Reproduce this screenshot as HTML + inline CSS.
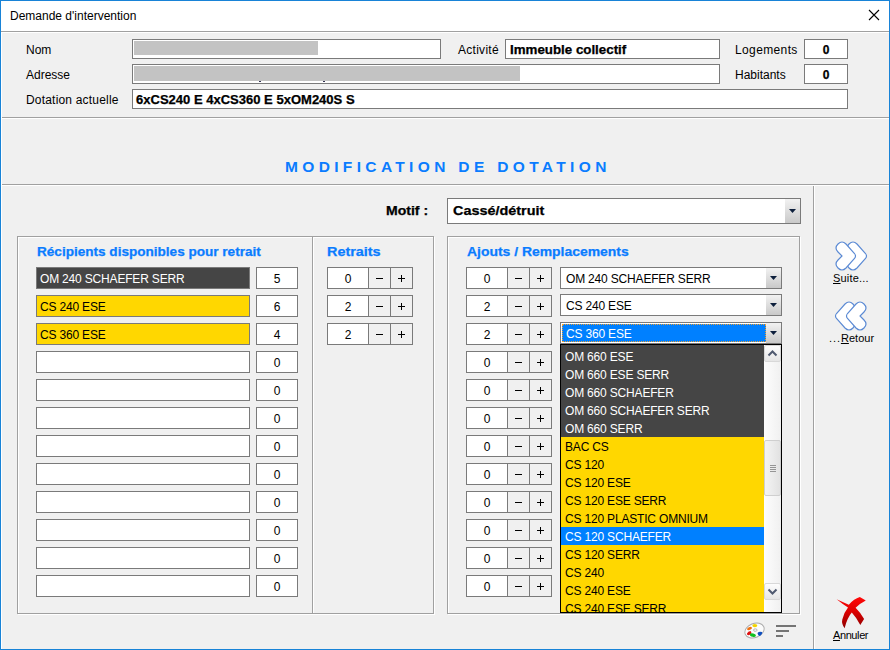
<!DOCTYPE html>
<html><head><meta charset="utf-8"><style>
html,body{margin:0;padding:0;}
body{width:890px;height:650px;position:relative;overflow:hidden;font-family:"Liberation Sans", sans-serif;background:#f0f0f0;}
body div, body svg{position:absolute;}
body div div{position:absolute;}
</style></head><body>
<div style="left:0px;top:0px;width:890px;height:650px;background:#1883d7;"></div>
<div style="left:1px;top:1px;width:888px;height:648px;background:#f0f0f0;"></div>
<div style="left:1px;top:1px;width:888px;height:30px;background:#ffffff;"></div>
<div style="left:1px;top:31px;width:888px;height:1px;background:#a0a0a0;"></div>
<div style="left:1px;top:32px;width:888px;height:1px;background:#ffffff;"></div>
<div style="left:1px;top:32px;width:1px;height:617px;background:#ffffff;"></div>
<div style="left:10px;top:10px;font-size:12px;line-height:12px;font-weight:normal;color:#000;white-space:nowrap;">Demande d'intervention</div>
<svg style="left:868px;top:9px" width="12" height="12" viewBox="0 0 12 12"><path d="M1 1L11 11M11 1L1 11" stroke="#000" stroke-width="1.1"/></svg>
<div style="left:26px;top:44px;font-size:12px;line-height:12px;font-weight:normal;color:#000;white-space:nowrap;">Nom</div>
<div style="left:26px;top:69px;font-size:12px;line-height:12px;font-weight:normal;color:#000;white-space:nowrap;">Adresse</div>
<div style="left:26px;top:94px;font-size:12px;line-height:12px;font-weight:normal;color:#000;white-space:nowrap;letter-spacing:0.19px;">Dotation actuelle</div>
<div style="left:132px;top:39px;width:309px;height:20px;background:#fff;border:1px solid #7a7a7a;box-sizing:border-box;"></div>
<div style="left:134px;top:41px;width:184px;height:14px;background:#c3c3c3;"></div>
<div style="left:132px;top:64px;width:588px;height:20px;background:#fff;border:1px solid #7a7a7a;box-sizing:border-box;"></div>
<div style="left:134px;top:66px;width:386px;height:15px;background:#c3c3c3;"></div>
<div style="left:259px;top:81px;width:2px;height:1px;background:#303050;"></div>
<div style="left:323px;top:81px;width:2px;height:1px;background:#303050;"></div>
<div style="left:132px;top:89px;width:716px;height:20px;background:#fff;border:1px solid #7a7a7a;box-sizing:border-box;"></div>
<div style="left:136px;top:94px;font-size:12px;line-height:12px;font-weight:bold;color:#000;white-space:nowrap;transform:scaleX(1.085);transform-origin:0 0;-webkit-text-stroke:0.25px #000;">6xCS240 E 4xCS360 E 5xOM240S S</div>
<div style="left:458px;top:44px;font-size:12px;line-height:12px;font-weight:normal;color:#000;white-space:nowrap;letter-spacing:0.28px;">Activité</div>
<div style="left:505px;top:39px;width:215px;height:20px;background:#fff;border:1px solid #7a7a7a;box-sizing:border-box;"></div>
<div style="left:510px;top:44px;font-size:12px;line-height:12px;font-weight:bold;color:#000;white-space:nowrap;transform:scaleX(1.11);transform-origin:0 0;-webkit-text-stroke:0.25px #000;">Immeuble collectif</div>
<div style="left:735px;top:44px;font-size:12px;line-height:12px;font-weight:normal;color:#000;white-space:nowrap;letter-spacing:0.37px;">Logements</div>
<div style="left:735px;top:69px;font-size:12px;line-height:12px;font-weight:normal;color:#000;white-space:nowrap;">Habitants</div>
<div style="left:804px;top:39px;width:44px;height:20px;background:#fff;border:1px solid #7a7a7a;box-sizing:border-box;"></div>
<div style="left:804px;top:64px;width:44px;height:20px;background:#fff;border:1px solid #7a7a7a;box-sizing:border-box;"></div>
<div style="left:804px;top:44px;font-size:12px;line-height:12px;font-weight:bold;color:#000;white-space:nowrap;-webkit-text-stroke:0.25px #000;width:44px;text-align:center;">0</div>
<div style="left:804px;top:69px;font-size:12px;line-height:12px;font-weight:bold;color:#000;white-space:nowrap;-webkit-text-stroke:0.25px #000;width:44px;text-align:center;">0</div>
<div style="left:2px;top:117px;width:887px;height:1px;background:#a0a0a0;"></div>
<div style="left:2px;top:118px;width:887px;height:1px;background:#ffffff;"></div>
<div style="left:285px;top:159px;font-size:15.5px;line-height:15.5px;font-weight:bold;color:#0a7cff;white-space:nowrap;letter-spacing:4.35px;">MODIFICATION DE DOTATION</div>
<div style="left:2px;top:184px;width:887px;height:1px;background:#a0a0a0;"></div>
<div style="left:2px;top:185px;width:887px;height:1px;background:#ffffff;"></div>
<div style="left:813px;top:186px;width:1px;height:463px;background:#a0a0a0;"></div>
<div style="left:814px;top:186px;width:1px;height:463px;background:#ffffff;"></div>
<div style="left:386px;top:205px;font-size:12px;line-height:12px;font-weight:bold;color:#000;white-space:nowrap;transform:scaleX(1.17);transform-origin:0 0;-webkit-text-stroke:0.25px #000;">Motif :</div>
<div style="left:447px;top:198px;width:354px;height:26px;background:#fff;border:1px solid #7a7a7a;box-sizing:border-box;"></div>
<div style="left:785px;top:199px;width:15px;height:24px;background:linear-gradient(#f2f2f2,#c9c9c9)"></div>
<svg style="left:789px;top:209px" width="7" height="4" viewBox="0 0 7 4"><path d="M0 0H7L3.5 4Z" fill="#0d1f3c"/></svg>
<div style="left:453px;top:205px;font-size:12px;line-height:12px;font-weight:bold;color:#000;white-space:nowrap;transform:scaleX(1.2);transform-origin:0 0;-webkit-text-stroke:0.25px #000;">Cassé/détruit</div>
<div style="left:17px;top:236px;width:417px;height:378px;border:1px solid #a0a0a0;box-sizing:border-box;box-shadow:inset 1px 1px 0 #fff, 1px 1px 0 #fff"></div>
<div style="left:312px;top:237px;width:1px;height:376px;background:#a0a0a0;"></div>
<div style="left:313px;top:237px;width:1px;height:376px;background:#ffffff;"></div>
<div style="left:447px;top:236px;width:353px;height:378px;border:1px solid #a0a0a0;box-sizing:border-box;box-shadow:inset 1px 1px 0 #fff, 1px 1px 0 #fff"></div>
<div style="left:37px;top:246px;font-size:12px;line-height:12px;font-weight:bold;color:#0a7cff;white-space:nowrap;transform:scaleX(1.13);transform-origin:0 0;-webkit-text-stroke:0.25px #0a7cff;">Récipients disponibles pour retrait</div>
<div style="left:327px;top:246px;font-size:12px;line-height:12px;font-weight:bold;color:#0a7cff;white-space:nowrap;transform:scaleX(1.2);transform-origin:0 0;-webkit-text-stroke:0.25px #0a7cff;">Retraits</div>
<div style="left:467px;top:246px;font-size:12px;line-height:12px;font-weight:bold;color:#0a7cff;white-space:nowrap;transform:scaleX(1.16);transform-origin:0 0;-webkit-text-stroke:0.25px #0a7cff;">Ajouts / Remplacements</div>
<div style="left:36px;top:267px;width:214px;height:22px;background:#454545;border:1px solid #7a7a7a;box-sizing:border-box;"></div>
<div style="left:40px;top:273px;font-size:12px;line-height:12px;font-weight:normal;color:#fff;white-space:nowrap;letter-spacing:-0.18px;">OM 240 SCHAEFER SERR</div>
<div style="left:256px;top:267px;width:42px;height:22px;background:#fff;border:1px solid #7a7a7a;box-sizing:border-box;"></div>
<div style="left:256px;top:273px;font-size:12px;line-height:12px;font-weight:normal;color:#000;white-space:nowrap;width:42px;text-align:center;">5</div>
<div style="left:36px;top:295px;width:214px;height:22px;background:#ffd700;border:1px solid #7a7a7a;box-sizing:border-box;"></div>
<div style="left:40px;top:301px;font-size:12px;line-height:12px;font-weight:normal;color:#000;white-space:nowrap;letter-spacing:-0.18px;">CS 240 ESE</div>
<div style="left:256px;top:295px;width:42px;height:22px;background:#fff;border:1px solid #7a7a7a;box-sizing:border-box;"></div>
<div style="left:256px;top:301px;font-size:12px;line-height:12px;font-weight:normal;color:#000;white-space:nowrap;width:42px;text-align:center;">6</div>
<div style="left:36px;top:323px;width:214px;height:22px;background:#ffd700;border:1px solid #7a7a7a;box-sizing:border-box;"></div>
<div style="left:40px;top:329px;font-size:12px;line-height:12px;font-weight:normal;color:#000;white-space:nowrap;letter-spacing:-0.18px;">CS 360 ESE</div>
<div style="left:256px;top:323px;width:42px;height:22px;background:#fff;border:1px solid #7a7a7a;box-sizing:border-box;"></div>
<div style="left:256px;top:329px;font-size:12px;line-height:12px;font-weight:normal;color:#000;white-space:nowrap;width:42px;text-align:center;">4</div>
<div style="left:36px;top:351px;width:214px;height:22px;background:#fff;border:1px solid #7a7a7a;box-sizing:border-box;"></div>
<div style="left:256px;top:351px;width:42px;height:22px;background:#fff;border:1px solid #7a7a7a;box-sizing:border-box;"></div>
<div style="left:256px;top:357px;font-size:12px;line-height:12px;font-weight:normal;color:#000;white-space:nowrap;width:42px;text-align:center;">0</div>
<div style="left:36px;top:379px;width:214px;height:22px;background:#fff;border:1px solid #7a7a7a;box-sizing:border-box;"></div>
<div style="left:256px;top:379px;width:42px;height:22px;background:#fff;border:1px solid #7a7a7a;box-sizing:border-box;"></div>
<div style="left:256px;top:385px;font-size:12px;line-height:12px;font-weight:normal;color:#000;white-space:nowrap;width:42px;text-align:center;">0</div>
<div style="left:36px;top:407px;width:214px;height:22px;background:#fff;border:1px solid #7a7a7a;box-sizing:border-box;"></div>
<div style="left:256px;top:407px;width:42px;height:22px;background:#fff;border:1px solid #7a7a7a;box-sizing:border-box;"></div>
<div style="left:256px;top:413px;font-size:12px;line-height:12px;font-weight:normal;color:#000;white-space:nowrap;width:42px;text-align:center;">0</div>
<div style="left:36px;top:435px;width:214px;height:22px;background:#fff;border:1px solid #7a7a7a;box-sizing:border-box;"></div>
<div style="left:256px;top:435px;width:42px;height:22px;background:#fff;border:1px solid #7a7a7a;box-sizing:border-box;"></div>
<div style="left:256px;top:441px;font-size:12px;line-height:12px;font-weight:normal;color:#000;white-space:nowrap;width:42px;text-align:center;">0</div>
<div style="left:36px;top:463px;width:214px;height:22px;background:#fff;border:1px solid #7a7a7a;box-sizing:border-box;"></div>
<div style="left:256px;top:463px;width:42px;height:22px;background:#fff;border:1px solid #7a7a7a;box-sizing:border-box;"></div>
<div style="left:256px;top:469px;font-size:12px;line-height:12px;font-weight:normal;color:#000;white-space:nowrap;width:42px;text-align:center;">0</div>
<div style="left:36px;top:491px;width:214px;height:22px;background:#fff;border:1px solid #7a7a7a;box-sizing:border-box;"></div>
<div style="left:256px;top:491px;width:42px;height:22px;background:#fff;border:1px solid #7a7a7a;box-sizing:border-box;"></div>
<div style="left:256px;top:497px;font-size:12px;line-height:12px;font-weight:normal;color:#000;white-space:nowrap;width:42px;text-align:center;">0</div>
<div style="left:36px;top:519px;width:214px;height:22px;background:#fff;border:1px solid #7a7a7a;box-sizing:border-box;"></div>
<div style="left:256px;top:519px;width:42px;height:22px;background:#fff;border:1px solid #7a7a7a;box-sizing:border-box;"></div>
<div style="left:256px;top:525px;font-size:12px;line-height:12px;font-weight:normal;color:#000;white-space:nowrap;width:42px;text-align:center;">0</div>
<div style="left:36px;top:547px;width:214px;height:22px;background:#fff;border:1px solid #7a7a7a;box-sizing:border-box;"></div>
<div style="left:256px;top:547px;width:42px;height:22px;background:#fff;border:1px solid #7a7a7a;box-sizing:border-box;"></div>
<div style="left:256px;top:553px;font-size:12px;line-height:12px;font-weight:normal;color:#000;white-space:nowrap;width:42px;text-align:center;">0</div>
<div style="left:36px;top:575px;width:214px;height:22px;background:#fff;border:1px solid #7a7a7a;box-sizing:border-box;"></div>
<div style="left:256px;top:575px;width:42px;height:22px;background:#fff;border:1px solid #7a7a7a;box-sizing:border-box;"></div>
<div style="left:256px;top:581px;font-size:12px;line-height:12px;font-weight:normal;color:#000;white-space:nowrap;width:42px;text-align:center;">0</div>
<div style="left:327px;top:267px;width:42px;height:22px;background:#fff;border:1px solid #7a7a7a;box-sizing:border-box;"></div>
<div style="left:327px;top:273px;font-size:12px;line-height:12px;font-weight:normal;color:#000;white-space:nowrap;width:42px;text-align:center;">0</div>
<div style="left:368px;top:267px;width:23px;height:22px;background:#f0f0f0;border:1px solid #7a7a7a;box-sizing:border-box;"></div>
<div style="left:376px;top:278px;width:7px;height:1px;background:#000;"></div>
<div style="left:390px;top:267px;width:23px;height:22px;background:#f0f0f0;border:1px solid #7a7a7a;box-sizing:border-box;"></div>
<div style="left:398px;top:278px;width:7px;height:1px;background:#000;"></div>
<div style="left:401px;top:275px;width:1px;height:7px;background:#000;"></div>
<div style="left:327px;top:295px;width:42px;height:22px;background:#fff;border:1px solid #7a7a7a;box-sizing:border-box;"></div>
<div style="left:327px;top:301px;font-size:12px;line-height:12px;font-weight:normal;color:#000;white-space:nowrap;width:42px;text-align:center;">2</div>
<div style="left:368px;top:295px;width:23px;height:22px;background:#f0f0f0;border:1px solid #7a7a7a;box-sizing:border-box;"></div>
<div style="left:376px;top:306px;width:7px;height:1px;background:#000;"></div>
<div style="left:390px;top:295px;width:23px;height:22px;background:#f0f0f0;border:1px solid #7a7a7a;box-sizing:border-box;"></div>
<div style="left:398px;top:306px;width:7px;height:1px;background:#000;"></div>
<div style="left:401px;top:303px;width:1px;height:7px;background:#000;"></div>
<div style="left:327px;top:323px;width:42px;height:22px;background:#fff;border:1px solid #7a7a7a;box-sizing:border-box;"></div>
<div style="left:327px;top:329px;font-size:12px;line-height:12px;font-weight:normal;color:#000;white-space:nowrap;width:42px;text-align:center;">2</div>
<div style="left:368px;top:323px;width:23px;height:22px;background:#f0f0f0;border:1px solid #7a7a7a;box-sizing:border-box;"></div>
<div style="left:376px;top:334px;width:7px;height:1px;background:#000;"></div>
<div style="left:390px;top:323px;width:23px;height:22px;background:#f0f0f0;border:1px solid #7a7a7a;box-sizing:border-box;"></div>
<div style="left:398px;top:334px;width:7px;height:1px;background:#000;"></div>
<div style="left:401px;top:331px;width:1px;height:7px;background:#000;"></div>
<div style="left:466px;top:267px;width:42px;height:22px;background:#fff;border:1px solid #7a7a7a;box-sizing:border-box;"></div>
<div style="left:466px;top:273px;font-size:12px;line-height:12px;font-weight:normal;color:#000;white-space:nowrap;width:42px;text-align:center;">0</div>
<div style="left:507px;top:267px;width:23px;height:22px;background:#f0f0f0;border:1px solid #7a7a7a;box-sizing:border-box;"></div>
<div style="left:515px;top:278px;width:7px;height:1px;background:#000;"></div>
<div style="left:529px;top:267px;width:23px;height:22px;background:#f0f0f0;border:1px solid #7a7a7a;box-sizing:border-box;"></div>
<div style="left:537px;top:278px;width:7px;height:1px;background:#000;"></div>
<div style="left:540px;top:275px;width:1px;height:7px;background:#000;"></div>
<div style="left:466px;top:295px;width:42px;height:22px;background:#fff;border:1px solid #7a7a7a;box-sizing:border-box;"></div>
<div style="left:466px;top:301px;font-size:12px;line-height:12px;font-weight:normal;color:#000;white-space:nowrap;width:42px;text-align:center;">2</div>
<div style="left:507px;top:295px;width:23px;height:22px;background:#f0f0f0;border:1px solid #7a7a7a;box-sizing:border-box;"></div>
<div style="left:515px;top:306px;width:7px;height:1px;background:#000;"></div>
<div style="left:529px;top:295px;width:23px;height:22px;background:#f0f0f0;border:1px solid #7a7a7a;box-sizing:border-box;"></div>
<div style="left:537px;top:306px;width:7px;height:1px;background:#000;"></div>
<div style="left:540px;top:303px;width:1px;height:7px;background:#000;"></div>
<div style="left:466px;top:323px;width:42px;height:22px;background:#fff;border:1px solid #7a7a7a;box-sizing:border-box;"></div>
<div style="left:466px;top:329px;font-size:12px;line-height:12px;font-weight:normal;color:#000;white-space:nowrap;width:42px;text-align:center;">2</div>
<div style="left:507px;top:323px;width:23px;height:22px;background:#f0f0f0;border:1px solid #7a7a7a;box-sizing:border-box;"></div>
<div style="left:515px;top:334px;width:7px;height:1px;background:#000;"></div>
<div style="left:529px;top:323px;width:23px;height:22px;background:#f0f0f0;border:1px solid #7a7a7a;box-sizing:border-box;"></div>
<div style="left:537px;top:334px;width:7px;height:1px;background:#000;"></div>
<div style="left:540px;top:331px;width:1px;height:7px;background:#000;"></div>
<div style="left:466px;top:351px;width:42px;height:22px;background:#fff;border:1px solid #7a7a7a;box-sizing:border-box;"></div>
<div style="left:466px;top:357px;font-size:12px;line-height:12px;font-weight:normal;color:#000;white-space:nowrap;width:42px;text-align:center;">0</div>
<div style="left:507px;top:351px;width:23px;height:22px;background:#f0f0f0;border:1px solid #7a7a7a;box-sizing:border-box;"></div>
<div style="left:515px;top:362px;width:7px;height:1px;background:#000;"></div>
<div style="left:529px;top:351px;width:23px;height:22px;background:#f0f0f0;border:1px solid #7a7a7a;box-sizing:border-box;"></div>
<div style="left:537px;top:362px;width:7px;height:1px;background:#000;"></div>
<div style="left:540px;top:359px;width:1px;height:7px;background:#000;"></div>
<div style="left:466px;top:379px;width:42px;height:22px;background:#fff;border:1px solid #7a7a7a;box-sizing:border-box;"></div>
<div style="left:466px;top:385px;font-size:12px;line-height:12px;font-weight:normal;color:#000;white-space:nowrap;width:42px;text-align:center;">0</div>
<div style="left:507px;top:379px;width:23px;height:22px;background:#f0f0f0;border:1px solid #7a7a7a;box-sizing:border-box;"></div>
<div style="left:515px;top:390px;width:7px;height:1px;background:#000;"></div>
<div style="left:529px;top:379px;width:23px;height:22px;background:#f0f0f0;border:1px solid #7a7a7a;box-sizing:border-box;"></div>
<div style="left:537px;top:390px;width:7px;height:1px;background:#000;"></div>
<div style="left:540px;top:387px;width:1px;height:7px;background:#000;"></div>
<div style="left:466px;top:407px;width:42px;height:22px;background:#fff;border:1px solid #7a7a7a;box-sizing:border-box;"></div>
<div style="left:466px;top:413px;font-size:12px;line-height:12px;font-weight:normal;color:#000;white-space:nowrap;width:42px;text-align:center;">0</div>
<div style="left:507px;top:407px;width:23px;height:22px;background:#f0f0f0;border:1px solid #7a7a7a;box-sizing:border-box;"></div>
<div style="left:515px;top:418px;width:7px;height:1px;background:#000;"></div>
<div style="left:529px;top:407px;width:23px;height:22px;background:#f0f0f0;border:1px solid #7a7a7a;box-sizing:border-box;"></div>
<div style="left:537px;top:418px;width:7px;height:1px;background:#000;"></div>
<div style="left:540px;top:415px;width:1px;height:7px;background:#000;"></div>
<div style="left:466px;top:435px;width:42px;height:22px;background:#fff;border:1px solid #7a7a7a;box-sizing:border-box;"></div>
<div style="left:466px;top:441px;font-size:12px;line-height:12px;font-weight:normal;color:#000;white-space:nowrap;width:42px;text-align:center;">0</div>
<div style="left:507px;top:435px;width:23px;height:22px;background:#f0f0f0;border:1px solid #7a7a7a;box-sizing:border-box;"></div>
<div style="left:515px;top:446px;width:7px;height:1px;background:#000;"></div>
<div style="left:529px;top:435px;width:23px;height:22px;background:#f0f0f0;border:1px solid #7a7a7a;box-sizing:border-box;"></div>
<div style="left:537px;top:446px;width:7px;height:1px;background:#000;"></div>
<div style="left:540px;top:443px;width:1px;height:7px;background:#000;"></div>
<div style="left:466px;top:463px;width:42px;height:22px;background:#fff;border:1px solid #7a7a7a;box-sizing:border-box;"></div>
<div style="left:466px;top:469px;font-size:12px;line-height:12px;font-weight:normal;color:#000;white-space:nowrap;width:42px;text-align:center;">0</div>
<div style="left:507px;top:463px;width:23px;height:22px;background:#f0f0f0;border:1px solid #7a7a7a;box-sizing:border-box;"></div>
<div style="left:515px;top:474px;width:7px;height:1px;background:#000;"></div>
<div style="left:529px;top:463px;width:23px;height:22px;background:#f0f0f0;border:1px solid #7a7a7a;box-sizing:border-box;"></div>
<div style="left:537px;top:474px;width:7px;height:1px;background:#000;"></div>
<div style="left:540px;top:471px;width:1px;height:7px;background:#000;"></div>
<div style="left:466px;top:491px;width:42px;height:22px;background:#fff;border:1px solid #7a7a7a;box-sizing:border-box;"></div>
<div style="left:466px;top:497px;font-size:12px;line-height:12px;font-weight:normal;color:#000;white-space:nowrap;width:42px;text-align:center;">0</div>
<div style="left:507px;top:491px;width:23px;height:22px;background:#f0f0f0;border:1px solid #7a7a7a;box-sizing:border-box;"></div>
<div style="left:515px;top:502px;width:7px;height:1px;background:#000;"></div>
<div style="left:529px;top:491px;width:23px;height:22px;background:#f0f0f0;border:1px solid #7a7a7a;box-sizing:border-box;"></div>
<div style="left:537px;top:502px;width:7px;height:1px;background:#000;"></div>
<div style="left:540px;top:499px;width:1px;height:7px;background:#000;"></div>
<div style="left:466px;top:519px;width:42px;height:22px;background:#fff;border:1px solid #7a7a7a;box-sizing:border-box;"></div>
<div style="left:466px;top:525px;font-size:12px;line-height:12px;font-weight:normal;color:#000;white-space:nowrap;width:42px;text-align:center;">0</div>
<div style="left:507px;top:519px;width:23px;height:22px;background:#f0f0f0;border:1px solid #7a7a7a;box-sizing:border-box;"></div>
<div style="left:515px;top:530px;width:7px;height:1px;background:#000;"></div>
<div style="left:529px;top:519px;width:23px;height:22px;background:#f0f0f0;border:1px solid #7a7a7a;box-sizing:border-box;"></div>
<div style="left:537px;top:530px;width:7px;height:1px;background:#000;"></div>
<div style="left:540px;top:527px;width:1px;height:7px;background:#000;"></div>
<div style="left:466px;top:547px;width:42px;height:22px;background:#fff;border:1px solid #7a7a7a;box-sizing:border-box;"></div>
<div style="left:466px;top:553px;font-size:12px;line-height:12px;font-weight:normal;color:#000;white-space:nowrap;width:42px;text-align:center;">0</div>
<div style="left:507px;top:547px;width:23px;height:22px;background:#f0f0f0;border:1px solid #7a7a7a;box-sizing:border-box;"></div>
<div style="left:515px;top:558px;width:7px;height:1px;background:#000;"></div>
<div style="left:529px;top:547px;width:23px;height:22px;background:#f0f0f0;border:1px solid #7a7a7a;box-sizing:border-box;"></div>
<div style="left:537px;top:558px;width:7px;height:1px;background:#000;"></div>
<div style="left:540px;top:555px;width:1px;height:7px;background:#000;"></div>
<div style="left:466px;top:575px;width:42px;height:22px;background:#fff;border:1px solid #7a7a7a;box-sizing:border-box;"></div>
<div style="left:466px;top:581px;font-size:12px;line-height:12px;font-weight:normal;color:#000;white-space:nowrap;width:42px;text-align:center;">0</div>
<div style="left:507px;top:575px;width:23px;height:22px;background:#f0f0f0;border:1px solid #7a7a7a;box-sizing:border-box;"></div>
<div style="left:515px;top:586px;width:7px;height:1px;background:#000;"></div>
<div style="left:529px;top:575px;width:23px;height:22px;background:#f0f0f0;border:1px solid #7a7a7a;box-sizing:border-box;"></div>
<div style="left:537px;top:586px;width:7px;height:1px;background:#000;"></div>
<div style="left:540px;top:583px;width:1px;height:7px;background:#000;"></div>
<div style="left:560px;top:267px;width:222px;height:22px;background:#fff;border:1px solid #7a7a7a;box-sizing:border-box;"></div>
<div style="left:766px;top:268px;width:15px;height:20px;background:linear-gradient(#f2f2f2,#c9c9c9)"></div>
<svg style="left:770px;top:276px" width="7" height="4" viewBox="0 0 7 4"><path d="M0 0H7L3.5 4Z" fill="#0d1f3c"/></svg>
<div style="left:566px;top:273px;font-size:12px;line-height:12px;font-weight:normal;color:#000;white-space:nowrap;letter-spacing:-0.18px;">OM 240 SCHAEFER SERR</div>
<div style="left:560px;top:294px;width:222px;height:22px;background:#fff;border:1px solid #7a7a7a;box-sizing:border-box;"></div>
<div style="left:766px;top:295px;width:15px;height:20px;background:linear-gradient(#f2f2f2,#c9c9c9)"></div>
<svg style="left:770px;top:303px" width="7" height="4" viewBox="0 0 7 4"><path d="M0 0H7L3.5 4Z" fill="#0d1f3c"/></svg>
<div style="left:566px;top:300px;font-size:12px;line-height:12px;font-weight:normal;color:#000;white-space:nowrap;letter-spacing:-0.18px;">CS 240 ESE</div>
<div style="left:560px;top:322px;width:222px;height:22px;background:#fff;border:1px solid #7a7a7a;box-sizing:border-box;"></div>
<div style="left:766px;top:323px;width:15px;height:20px;background:linear-gradient(#f2f2f2,#c9c9c9)"></div>
<svg style="left:770px;top:331px" width="7" height="4" viewBox="0 0 7 4"><path d="M0 0H7L3.5 4Z" fill="#0d1f3c"/></svg>
<div style="left:562px;top:324px;width:204px;height:18px;background:#0080ff;outline:1px dotted #f0a030;outline-offset:-1px"></div>
<div style="left:566px;top:328px;font-size:12px;line-height:12px;font-weight:normal;color:#fff;white-space:nowrap;letter-spacing:-0.18px;">CS 360 ESE</div>
<div style="left:560px;top:344px;width:222px;height:269px;border:1px solid #000;box-sizing:border-box;background:#fff;overflow:hidden">
<div style="left:0;top:-16px;width:203px;height:18px;background:#454545"></div>
<div style="left:4px;top:-12px;font-size:12px;line-height:12px;color:#fff;white-space:nowrap;letter-spacing:-0.18px">OM 660</div>
<div style="left:0;top:2px;width:203px;height:18px;background:#454545"></div>
<div style="left:4px;top:6px;font-size:12px;line-height:12px;color:#fff;white-space:nowrap;letter-spacing:-0.18px">OM 660 ESE</div>
<div style="left:0;top:20px;width:203px;height:18px;background:#454545"></div>
<div style="left:4px;top:24px;font-size:12px;line-height:12px;color:#fff;white-space:nowrap;letter-spacing:-0.18px">OM 660 ESE SERR</div>
<div style="left:0;top:38px;width:203px;height:18px;background:#454545"></div>
<div style="left:4px;top:42px;font-size:12px;line-height:12px;color:#fff;white-space:nowrap;letter-spacing:-0.18px">OM 660 SCHAEFER</div>
<div style="left:0;top:56px;width:203px;height:18px;background:#454545"></div>
<div style="left:4px;top:60px;font-size:12px;line-height:12px;color:#fff;white-space:nowrap;letter-spacing:-0.18px">OM 660 SCHAEFER SERR</div>
<div style="left:0;top:74px;width:203px;height:18px;background:#454545"></div>
<div style="left:4px;top:78px;font-size:12px;line-height:12px;color:#fff;white-space:nowrap;letter-spacing:-0.18px">OM 660 SERR</div>
<div style="left:0;top:92px;width:203px;height:18px;background:#ffd700"></div>
<div style="left:4px;top:96px;font-size:12px;line-height:12px;color:#000;white-space:nowrap;letter-spacing:-0.18px">BAC CS</div>
<div style="left:0;top:110px;width:203px;height:18px;background:#ffd700"></div>
<div style="left:4px;top:114px;font-size:12px;line-height:12px;color:#000;white-space:nowrap;letter-spacing:-0.18px">CS 120</div>
<div style="left:0;top:128px;width:203px;height:18px;background:#ffd700"></div>
<div style="left:4px;top:132px;font-size:12px;line-height:12px;color:#000;white-space:nowrap;letter-spacing:-0.18px">CS 120 ESE</div>
<div style="left:0;top:146px;width:203px;height:18px;background:#ffd700"></div>
<div style="left:4px;top:150px;font-size:12px;line-height:12px;color:#000;white-space:nowrap;letter-spacing:-0.18px">CS 120 ESE SERR</div>
<div style="left:0;top:164px;width:203px;height:18px;background:#ffd700"></div>
<div style="left:4px;top:168px;font-size:12px;line-height:12px;color:#000;white-space:nowrap;letter-spacing:-0.18px">CS 120 PLASTIC OMNIUM</div>
<div style="left:0;top:182px;width:203px;height:18px;background:#0080ff"></div>
<div style="left:4px;top:186px;font-size:12px;line-height:12px;color:#fff;white-space:nowrap;letter-spacing:-0.18px">CS 120 SCHAEFER</div>
<div style="left:0;top:200px;width:203px;height:18px;background:#ffd700"></div>
<div style="left:4px;top:204px;font-size:12px;line-height:12px;color:#000;white-space:nowrap;letter-spacing:-0.18px">CS 120 SERR</div>
<div style="left:0;top:218px;width:203px;height:18px;background:#ffd700"></div>
<div style="left:4px;top:222px;font-size:12px;line-height:12px;color:#000;white-space:nowrap;letter-spacing:-0.18px">CS 240</div>
<div style="left:0;top:236px;width:203px;height:18px;background:#ffd700"></div>
<div style="left:4px;top:240px;font-size:12px;line-height:12px;color:#000;white-space:nowrap;letter-spacing:-0.18px">CS 240 ESE</div>
<div style="left:0;top:254px;width:203px;height:18px;background:#ffd700"></div>
<div style="left:4px;top:258px;font-size:12px;line-height:12px;color:#000;white-space:nowrap;letter-spacing:-0.18px">CS 240 ESE SERR</div>
</div>
<div style="left:764px;top:345px;width:17px;height:267px;background:linear-gradient(90deg,#fdfdfd,#f0f0f0)"></div>
<div style="left:764px;top:345px;width:17px;height:17px;border:1px solid #d8d8d8;box-sizing:border-box;background:linear-gradient(#fdfdfd,#e6e6e6);border-radius:2px"></div>
<svg style="left:767px;top:349px" width="11" height="8" viewBox="0 0 11 8"><path d="M1.5 6.5L5.5 2.5L9.5 6.5" stroke="#505a70" stroke-width="2" fill="none"/></svg>
<div style="left:764px;top:440px;width:17px;height:56px;border:1px solid #cfcfcf;box-sizing:border-box;background:linear-gradient(90deg,#f4f4f4,#e2e2e2);border-radius:2px"></div>
<div style="left:770px;top:465px;width:6px;height:1px;background:#959595"></div>
<div style="left:770px;top:467px;width:6px;height:1px;background:#959595"></div>
<div style="left:770px;top:469px;width:6px;height:1px;background:#959595"></div>
<div style="left:770px;top:471px;width:6px;height:1px;background:#959595"></div>
<div style="left:764px;top:583px;width:17px;height:17px;border:1px solid #d8d8d8;box-sizing:border-box;background:linear-gradient(#fdfdfd,#e6e6e6);border-radius:2px"></div>
<svg style="left:767px;top:588px" width="11" height="8" viewBox="0 0 11 8"><path d="M1.5 1.5L5.5 5.5L9.5 1.5" stroke="#505a70" stroke-width="2" fill="none"/></svg>
<svg style="left:834px;top:240px" width="34" height="32" viewBox="0 0 34 32"><g transform="translate(11,0)"><path d="M4 4 Q8 0 12 4 L20.5 13.5 Q22.5 16 20.5 18.5 L12 28 Q8 32 4 28 Q0 24 4 20 L8 16 L4 12 Q0 8 4 4Z" fill="#fff" stroke="#5b8ad4" stroke-width="1.15"/></g><g><path d="M4 4 Q8 0 12 4 L20.5 13.5 Q22.5 16 20.5 18.5 L12 28 Q8 32 4 28 Q0 24 4 20 L8 16 L4 12 Q0 8 4 4Z" fill="#fff" stroke="#5b8ad4" stroke-width="1.15"/></g></svg>
<div style="left:833px;top:273px;font-size:11px;line-height:11px;font-weight:normal;color:#000;white-space:nowrap;letter-spacing:0.2px;"><u>S</u>uite...</div>
<svg style="left:834px;top:300px" width="34" height="32" viewBox="0 0 34 32"><g transform="translate(34,0) scale(-1,1)"><g transform="translate(11,0)"><path d="M4 4 Q8 0 12 4 L20.5 13.5 Q22.5 16 20.5 18.5 L12 28 Q8 32 4 28 Q0 24 4 20 L8 16 L4 12 Q0 8 4 4Z" fill="#fff" stroke="#5b8ad4" stroke-width="1.15"/></g><g><path d="M4 4 Q8 0 12 4 L20.5 13.5 Q22.5 16 20.5 18.5 L12 28 Q8 32 4 28 Q0 24 4 20 L8 16 L4 12 Q0 8 4 4Z" fill="#fff" stroke="#5b8ad4" stroke-width="1.15"/></g></g></svg>
<div style="left:829px;top:333px;font-size:11px;line-height:11px;font-weight:normal;color:#000;white-space:nowrap;letter-spacing:0.05px;"><span style="letter-spacing:0.9px">...</span><u>R</u>etour</div>
<svg style="left:836px;top:596px" width="31" height="34" viewBox="0 0 31 34"><defs><linearGradient id="rg" x1="0" y1="0" x2="0" y2="1"><stop offset="0" stop-color="#ff0808"/><stop offset="0.45" stop-color="#e00000"/><stop offset="1" stop-color="#8c0000"/></linearGradient></defs><path d="M0.6 3.2 L12.8 8.7 Q18 3 23.8 1.1 L29.8 4.5 Q23 8 19.6 11.7 Q25 17 28.1 23.1 L24.3 29 Q20 21 15.8 16.5 Q11.2 21.8 8.6 32.2 Q5.3 27.5 6.3 23.5 Q8 16.5 12 11.6 Q6 7.5 0.6 3.2Z" fill="url(#rg)"/></svg>
<div style="left:833px;top:630px;font-size:11px;line-height:11px;font-weight:normal;color:#000;white-space:nowrap;letter-spacing:-0.4px;"><u>A</u>nnuler</div>
<svg style="left:743px;top:621px" width="23" height="19" viewBox="0 0 23 19"><g transform="rotate(-22 11.5 9.5)"><ellipse cx="11.5" cy="9.5" rx="10" ry="7" fill="#fbfbfb" stroke="#a8a8a8" stroke-width="0.9"/></g><ellipse cx="11.8" cy="4.6" rx="2.5" ry="1.7" fill="#f2d400"/><ellipse cx="6.5" cy="7.5" rx="2.6" ry="1.5" fill="#f07010" transform="rotate(-25 6.5 7.5)"/><path d="M4 12.5 Q5 10 7.5 10 Q9 11 8 13 Q6 15 4 13.5Z" fill="#e01010"/><ellipse cx="9.9" cy="14.1" rx="3" ry="1.7" fill="#10c020" transform="rotate(12 9.9 14.1)"/><path d="M14.5 12 Q16 10 19 11 Q20 12.5 17 15 Q15 15 14.5 12Z" fill="#1050c0"/><ellipse cx="12.3" cy="9.1" rx="1.8" ry="1.3" fill="#f4f4f4" stroke="#a0a0a0" stroke-width="0.7"/></svg>
<div style="left:776px;top:625px;width:20px;height:2px;background:#747474;"></div>
<div style="left:776px;top:630px;width:13px;height:2px;background:#747474;"></div>
<div style="left:776px;top:635px;width:7px;height:2px;background:#747474;"></div>
</body></html>
